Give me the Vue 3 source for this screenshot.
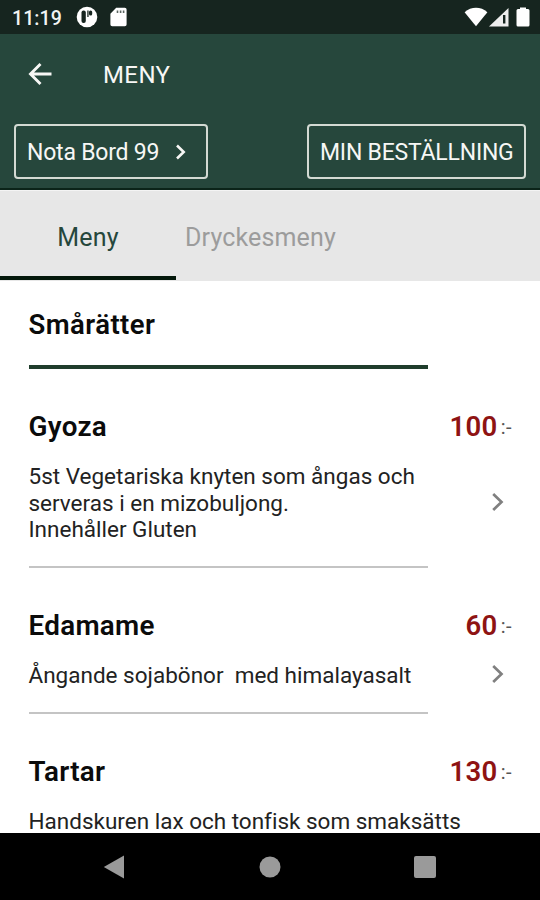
<script setup>
const items = [
  {
    name: 'Gyoza',
    price: 100,
    lines: ['5st Vegetariska knyten som ångas och', 'serveras i en mizobuljong.', 'Innehåller Gluten'],
  },
  { name: 'Edamame', price: 60, lines: ['Ångande sojabönor\u00a0 med himalayasalt'] },
  { name: 'Tartar', price: 130, lines: ['Handskuren lax och tonfisk som smaksätts'], last: true },
]
</script>

<template>
  <div class="screen">
    <div class="status">
      <span class="time">11:19</span>
      <svg class="s-app" width="22" height="22" viewBox="0 0 22 22">
        <circle cx="11" cy="11" r="10.3" fill="#fff" />
        <rect x="5.500" y="4.500" width="4.300" height="12.500" rx="2" fill="#16251f" />
        <path d="M11.300 4.500h1.300v6.500h-1.300z" fill="#16251f" />
        <rect x="13" y="4.500" width="3.200" height="5" rx="1.500" fill="#16251f" />
      </svg>
      <svg class="s-card" width="17" height="20" viewBox="0 0 17 20">
        <path d="M6.2.7h8.6a1.8 1.8 0 0 1 1.8 1.8v15a1.8 1.8 0 0 1-1.8 1.8H2.2a1.8 1.8 0 0 1-1.8-1.8V6.7z" fill="#fff" />
        <path d="M7.500 3.500v2.500M10.600 3.500v2.500M13.600 3.500v2.500" stroke="#5b6661" stroke-width="1.600" />
      </svg>
      <span class="spacer"></span>
      <svg class="s-wifi" width="24" height="20" viewBox="0 0 24 20">
        <path d="M.6 5.2C7.2-.6 16.800-.6 23.400 5.200L12 19.300z" fill="#fff" />
      </svg>
      <svg class="s-cell" width="20" height="19" viewBox="0 0 20 19">
        <path d="M0 18.600L19.500 0V18.600z" fill="#eee" />
        <path d="M15.200 7v8.500" stroke="#16251f" stroke-width="2.400" />
      </svg>
      <svg class="s-batt" width="14" height="20" viewBox="0 0 14 20">
        <path d="M4 .5h6V2h2a1.500 1.500 0 0 1 1.500 1.500V18A1.500 1.500 0 0 1 12 19.500H2A1.500 1.500 0 0 1 .5 18V3.500A1.500 1.500 0 0 1 2 2h2z" fill="#fff" />
      </svg>
    </div>

    <header class="header">
      <div class="bar">
        <svg class="back" width="26" height="26" viewBox="0 0 26 26">
          <path d="M24.500 13H4M13.500 3L3.500 13L13.500 23" fill="none" stroke="#f7f7f5" stroke-width="2.900" />
        </svg>
        <h1 class="heading">MENY</h1>
      </div>
      <div class="actions">
        <button class="btn table">
          <span class="table-label">Nota Bord 99</span>
          <svg width="12" height="18" viewBox="0 0 12 18">
            <path d="M2 2.500L8.700 9L2 15.500" fill="none" stroke="#f7f7f5" stroke-width="2.600" />
          </svg>
        </button>
        <button class="btn order"><span class="order-label">MIN BESTÄLLNING</span></button>
      </div>
    </header>

    <nav class="tabs">
      <div class="tab active"><span class="tab1">Meny</span></div>
      <div class="tab"><span class="tab2">Dryckesmeny</span></div>
    </nav>

    <main class="content">
      <h2 class="section">Smårätter</h2>
      <article v-for="item in items" :key="item.name" class="item">
        <div class="top">
          <h3 class="name">{{ item.name }}</h3>
          <div class="price"><b>{{ item.price }}</b><span>:-</span></div>
        </div>
        <div class="body">
          <p class="desc"><span v-for="line in item.lines" :key="line">{{ line }}</span></p>
          <svg v-if="!item.last" class="chev" width="14" height="20" viewBox="0 0 14 20">
            <path d="M2.200 2L10.500 10L2.200 18" fill="none" stroke="#808080" stroke-width="2.700" />
          </svg>
        </div>
      </article>
    </main>

    <footer class="nav">
      <svg width="22" height="24" viewBox="0 0 22 24"><path d="M21 .6V23.400L.8 12z" fill="#9a9a9a" /></svg>
      <svg width="22" height="22" viewBox="0 0 22 22"><circle cx="11" cy="11" r="10.500" fill="#9a9a9a" /></svg>
      <svg width="22" height="22" viewBox="0 0 22 22"><rect width="22" height="22" rx="2" fill="#9a9a9a" /></svg>
    </footer>
  </div>
</template>

<style>
body { margin: 0; }
</style>

<style scoped>
* { box-sizing: border-box; }
h1, h2, h3, p { margin: 0; }
.screen {
  width: 540px;
  height: 900px;
  display: flex;
  flex-direction: column;
  overflow: hidden;
  background: #fff;
  font-family: Roboto, "Liberation Sans", sans-serif;
  font-variant-ligatures: none;
  white-space: nowrap;
}
.screen svg { display: block; flex: none; }
.status {
  height: 34px;
  flex: none;
  display: flex;
  align-items: center;
  padding: 0 10px 0 12px;
  background: #16251f;
  color: #f2f4f3;
}
.time { width: 64px; font-size: 19.500px; font-weight: 500; letter-spacing: 0.100px; padding-top: 2px; }
.s-card { margin-left: 12px; }
.spacer { flex: 1; }
.s-wifi { margin-right: 1px; }
.s-batt { margin-left: 7px; }
.header {
  height: 156px;
  flex: none;
  background: #26473c;
  border-bottom: 2px solid #0b2419;
  color: #f7f7f5;
}
.bar { height: 90px; display: flex; align-items: flex-start; padding: 27px 0 0 27px; }
.heading { margin-left: 50px; font-size: 24px; line-height: 28px; font-weight: 400; letter-spacing: 0.400px; }
.actions { display: flex; justify-content: space-between; padding: 0 14px; }
.btn {
  height: 55px;
  border: 2px solid #d3dad3;
  border-radius: 4px;
  background: transparent;
  color: inherit;
  font: 400 23px/28px Roboto, "Liberation Sans", sans-serif;
  letter-spacing: -0.220px;
  display: flex;
  align-items: center;
  padding: 2px 0 0 11px;
}
.table { width: 194px; }
.order { width: 219px; }
.table svg { margin: 0 0 2px 16px; }
.tabs { height: 91px; flex: none; display: flex; background: #e7e7e7; border-top: 1px solid #f4f4f4; }
.tab { height: 89px; width: 169px; display: flex; justify-content: center; padding-top: 32px; font-size: 25px; line-height: 29px; letter-spacing: 0.150px; color: #9c9c9c; }
.tab.active { width: 176px; border-bottom: 4px solid #04180b; color: #26473c; }
.content { flex: 1; min-height: 0; overflow: hidden; padding: 0 28px 0 28.500px; color: #0b0b0b; }
.section {
  width: 399px;
  height: 88px;
  padding-top: 28px;
  border-bottom: 4px solid #1f3d2c;
  font-size: 27.500px;
  line-height: 32px;
  font-weight: 600;
  letter-spacing: 0.450px;
}
.item { padding-top: 41px; }
.top { display: flex; justify-content: space-between; height: 53px; line-height: 34px; }
.name { font-size: 27.800px; font-weight: 600; letter-spacing: 0.300px; }
.price { display: flex; color: #555; font-size: 20px; letter-spacing: 0.500px; }
.price b { color: #8e1313; font-size: 27.500px; font-weight: 600; letter-spacing: 0.300px; margin-right: 3px; }
.body { display: flex; align-items: center; justify-content: space-between; padding-right: 7px; }
.desc {
  width: 399px;
  padding: 0 0 23px;
  border-bottom: 2px solid #c4c4c4;
  font-size: 22.500px;
  line-height: 26.700px;
  color: #222;
}
.desc span { display: block; white-space: pre; width: max-content; }
.chev { margin-bottom: 27px; }
.nav {
  height: 67px;
  flex: none;
  display: flex;
  align-items: center;
  justify-content: space-between;
  padding: 0 104px 0 103px;
  background: #000;
}
</style>
